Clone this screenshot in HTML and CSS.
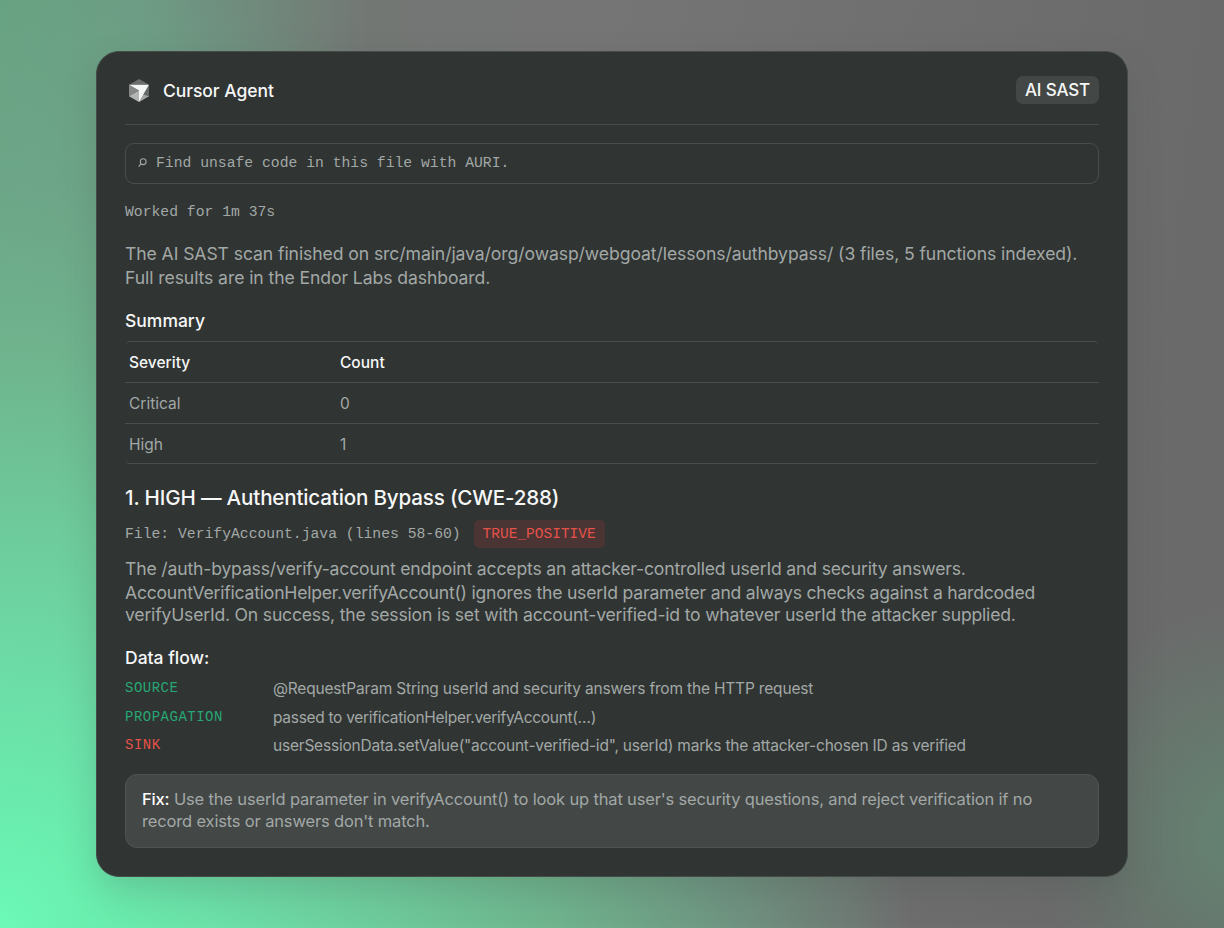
FILE: index.html
```html
<!DOCTYPE html>
<html lang="en">
<head>
<meta charset="utf-8">
<title>Cursor Agent</title>
<link rel="stylesheet" href="styles.css">
</head>
<body>
<main class="card">
  <header class="card-header">
    <div class="brand">
      <svg class="logo" viewBox="0 0 20 23" width="20" height="23" aria-hidden="true">
        <path fill="#6b6e6d" d="M10 0 20 5.7H0z"/>
        <path fill="#858887" d="M0 5.7 10 11.5 0 17.2z"/>
        <path fill="#656968" d="M20 5.7V17.2L10 23z"/>
        <path fill="#b4b6b5" d="M0 17.2 10 11.5V23z"/>
        <path fill="#a2a5a4" d="M10 23 14 15.5 20 17.2z"/>
        <path fill="#f4f5f5" d="M0 5.7H20L10 23V11.5z"/>
      </svg>
      <span class="title">Cursor Agent</span>
    </div>
    <span class="tag">AI SAST</span>
  </header>

  <div class="prompt">
    <svg class="search" viewBox="0 0 9 10" width="9" height="10" aria-hidden="true"><circle cx="5.2" cy="3.7" r="2.9"/><path d="M3.1 5.8.6 8.6"/></svg>
    <span class="mono">Find unsafe code in this file with AURI.</span>
  </div>
  <p class="mono worked">Worked for 1m 37s</p>

  <p class="body intro">The AI SAST scan finished on src/main/java/org/owasp/webgoat/lessons/authbypass/ (3 files, 5 functions indexed).<br>Full results are in the Endor Labs dashboard.</p>

  <h2 class="heading">Summary</h2>
  <div class="table">
    <div class="row head"><span>Severity</span><span>Count</span></div>
    <div class="row"><span>Critical</span><span>0</span></div>
    <div class="row"><span>High</span><span>1</span></div>
  </div>

  <h1 class="finding">1. HIGH — Authentication Bypass (CWE-288)</h1>
  <div class="file">
    <span class="mono">File: VerifyAccount.java (lines 58-60)</span>
    <span class="verdict">TRUE_POSITIVE</span>
  </div>
  <p class="body details"><span class="d1">The /auth-bypass/verify-account endpoint accepts an attacker-controlled userId and security answers.</span><span class="d2">AccountVerificationHelper.verifyAccount() ignores the userId parameter and always checks against a hardcoded</span><span class="d3">verifyUserId. On success, the session is set with account-verified-id to whatever userId the attacker supplied.</span></p>

  <h2 class="heading flow-heading">Data flow:</h2>
  <dl class="flow">
    <dt>SOURCE</dt><dd>@RequestParam String userId and security answers from the HTTP request</dd>
    <dt>PROPAGATION</dt><dd class="call">passed to verificationHelper.verifyAccount(…)</dd>
    <dt class="sink">SINK</dt><dd class="mark">userSessionData.setValue("account-verified-id", userId) marks the attacker-chosen ID as verified</dd>
  </dl>

  <p class="fix"><b>Fix:</b> Use the userId parameter in verifyAccount() to look up that user's security questions, and reject verification if no<br>record exists or answers don't match.</p>
</main>
</body>
</html>
```
FILE: styles.css
```css
* { box-sizing: border-box; }
body {
  margin: 0;
  height: 928px;
  padding: 51px 96px;
  overflow: hidden;
  font-family: Inter, "Liberation Sans", sans-serif;
  color: #a2a8a6;
  background:
    radial-gradient(ellipse 200px 230px at 1240px 835px, rgba(98, 138, 115, .8), transparent),
    radial-gradient(ellipse 960px 1000px at 0 928px, #6cf9b7, #6aedae 11%, #6cdea7 24%, #6ecb9b 40%, #6fb38d 58%, rgba(110, 168, 138, .7) 74%, transparent 95%),
    linear-gradient(96deg, #67a282 0, #6d9c84 140px, #737774 370px, #757575 600px, #6a6a6a 1224px);
}
p, h1, h2, dl, dd { margin: 0; white-space: nowrap; }
.card {
  width: 1032px;
  height: 826px;
  padding: 0 28px;
  border: 1px solid #454b48;
  border-radius: 23px;
  background: #303433;
  box-shadow: 0 14px 35px rgba(60, 70, 65, .2);
  display: flex;
  flex-direction: column;
}
.card-header {
  height: 73px;
  flex: none;
  display: flex;
  align-items: center;
  justify-content: space-between;
  padding-top: 4px;
  border-bottom: 1px solid #474b4a;
}
.brand { display: flex; align-items: center; gap: 14px; padding-left: 4px; }
.title { color: #f6f7f7; font-size: 17.5px; font-weight: 500; letter-spacing: -.05px; }
.tag {
  width: 83px;
  height: 28px;
  border-radius: 7px;
  background: #434746;
  color: #f6f7f7;
  font-size: 17px;
  font-weight: 500;
  letter-spacing: -.15px;
  line-height: 29px;
  text-align: center;
}
.mono { font-family: "Liberation Mono", monospace; font-size: 14.72px; line-height: 20px; }
.prompt {
  flex: none;
  margin-top: 18px;
  height: 41px;
  padding: 0 12px 1px;
  border: 1px solid #494d4c;
  border-radius: 9px;
  display: flex;
  align-items: center;
  gap: 9px;
}
.search { fill: none; stroke: #a2a8a6; stroke-width: 1.1; }
.worked { margin-top: 18px; }
.body { font-size: 17.6px; line-height: 24px; }
.intro { margin-top: 20px; letter-spacing: -.09px; }
.heading { margin-top: 19px; color: #f6f7f7; font-size: 17.5px; font-weight: 500; line-height: 24px; }
.table {
  flex: none;
  margin-top: 8px;
  height: 123px;
  border: 1px solid #4a4e4d;
  border-width: 1px 0;
  border-radius: 5px;
  display: grid;
  grid-template-rows: 41px 41px 39px;
}
.row {
  display: grid;
  grid-template-columns: 211px 1fr;
  align-items: center;
  padding-left: 4px;
  font-size: 15.5px;
  border-bottom: 1px solid #4a4e4d;
}
.row:last-child { border-bottom: 0; padding-top: 1px; }
.head { color: #f6f7f7; font-weight: 500; }
.finding { margin-top: 20px; color: #f6f7f7; font-size: 20.6px; font-weight: 500; line-height: 28px; letter-spacing: -.17px; }
.file { display: flex; align-items: center; gap: 13px; height: 28px; margin-top: 8px; }
.file .mono { padding-bottom: 1px; }
.verdict {
  width: 131px;
  height: 28px;
  border-radius: 5px;
  background: #4a3534;
  color: #e5524a;
  font: 14.5px/29px "Liberation Mono", monospace;
  text-align: center;
}
.details { display: flex; flex-direction: column; margin-top: 9px; line-height: 23px; }
.d1 { letter-spacing: -.17px; line-height: 24px; }
.d2 { letter-spacing: -.23px; }
.d3 { letter-spacing: -.2px; line-height: 22px; }
.flow-heading { margin-top: 20px; }
.flow {
  display: grid;
  grid-template-columns: 148px 1fr;
  grid-auto-rows: 28.5px;
  margin-top: 5px;
  font-size: 15.5px;
  letter-spacing: -.18px;
  line-height: 28px;
}
.flow dt { color: #27a773; font: 14px/26px "Liberation Mono", monospace; letter-spacing: .5px; }
.flow .sink { color: #e5524a; }
.flow .call { letter-spacing: -.3px; }
.flow .mark { letter-spacing: -.21px; }
.fix {
  height: 74px;
  margin-top: 13px;
  padding: 13px 16px;
  border: 1px solid #4f5352;
  border-radius: 12px;
  background: #434746;
  font-size: 16.5px;
  letter-spacing: -.16px;
  line-height: 22px;
}
.fix b { color: #fff; font-weight: 500; }
```
